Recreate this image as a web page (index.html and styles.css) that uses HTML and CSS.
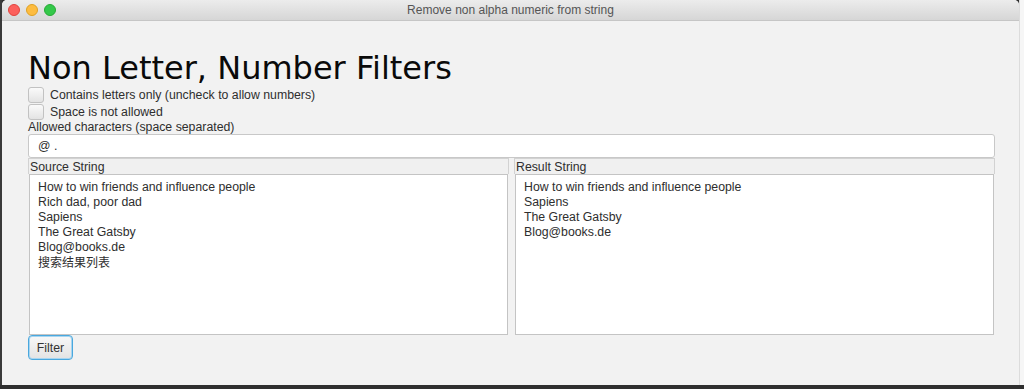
FILE: index.html
```html
<!DOCTYPE html>
<html>
<head>
<meta charset="utf-8">
<link rel="stylesheet" href="styles.css">
</head>
<body>
<div class="screen">
  <div class="row">
    <div class="edge-left"></div>
    <div class="window">
      <div class="titlebar">
        <div class="lights">
          <span class="light red"></span>
          <span class="light yellow"></span>
          <span class="light green"></span>
        </div>
        <div class="title">Remove non alpha numeric from string</div>
        <div></div>
      </div>
      <div class="content">
        <h1 class="heading">Non Letter, Number Filters</h1>
        <div class="check"><span class="box"></span><span>Contains letters only (uncheck to allow numbers)</span></div>
        <div class="check"><span class="box"></span><span>Space is not allowed</span></div>
        <div class="field-label">Allowed characters (space separated)</div>
        <div class="textfield">@ .</div>
        <div class="panels">
          <div class="panel">
            <div class="panel-head">Source String</div>
            <div class="textarea">
              <div>How to win friends and influence people</div>
              <div>Rich dad, poor dad</div>
              <div>Sapiens</div>
              <div>The Great Gatsby</div>
              <div>Blog@books.de</div>
              <div class="cjk">搜索结果列表</div>
            </div>
          </div>
          <div class="panel">
            <div class="panel-head">Result String</div>
            <div class="textarea">
              <div>How to win friends and influence people</div>
              <div>Sapiens</div>
              <div>The Great Gatsby</div>
              <div>Blog@books.de</div>
            </div>
          </div>
        </div>
        <div class="actions"><button class="btn">Filter</button></div>
      </div>
    </div>
    <div class="edge-right"></div>
  </div>
  <div class="bottom"></div>
</div>
</body>
</html>
```
FILE: styles.css
```css
html, body {
  margin: 0;
  padding: 0;
  background: #2e2e2e;
}
.screen {
  width: 1024px;
  height: 389px;
  display: flex;
  flex-direction: column;
  overflow: hidden;
  font-family: "Liberation Sans", Arial, "Noto Sans CJK SC", sans-serif;
  font-size: 12.3px;
  color: #2e2e2e;
}
.row {
  display: flex;
  height: 385px;
}
.edge-left {
  width: 2px;
  background: #3a3a3a;
}
.edge-right {
  width: 4px;
  background: #f6f6f6;
  border-left: 1px solid #dcdcdc;
}
.bottom {
  flex: 1;
  background: #2f2f2f;
}
.window {
  width: 1017px;
  background: #f2f2f2;
  border-radius: 5px 5px 0 0;
  display: flex;
  flex-direction: column;
  overflow: hidden;
}
.titlebar {
  height: 20px;
  border-bottom: 1px solid #c6c6c6;
  background: linear-gradient(#ececec, #d6d6d6);
  display: grid;
  grid-template-columns: 1fr auto 1fr;
  align-items: center;
}
.lights {
  display: flex;
  gap: 6px;
  padding-left: 6px;
}
.light {
  width: 12px;
  height: 12px;
  border-radius: 50%;
  box-sizing: border-box;
}
.red { background: #fc605c; border: 1px solid #e0443e; }
.yellow { background: #fdbc40; border: 1px solid #dea123; }
.green { background: #34c84a; border: 1px solid #27aa35; }
.title {
  font-size: 12px;
  color: #555;
}
.content {
  padding: 29px 24px 0 26px;
  display: flex;
  flex-direction: column;
}
.heading {
  margin: 0;
  font-family: "DejaVu Sans", sans-serif;
  font-weight: normal;
  font-size: 32px;
  line-height: 36px;
  color: #0a0a0a;
}
.check {
  height: 17px;
  display: flex;
  align-items: center;
  gap: 6px;
}
.box {
  width: 16px;
  height: 16px;
  box-sizing: border-box;
  border: 1px solid #c2c2c2;
  border-radius: 3px;
  background: linear-gradient(#fafafa, #e3e3e3);
}
.field-label {
  height: 14px;
  line-height: 14px;
}
.textfield {
  height: 24px;
  box-sizing: border-box;
  border: 1px solid #c8c8c8;
  border-radius: 3px;
  background: #fff;
  padding-left: 9px;
  line-height: 22px;
}
.panels {
  display: grid;
  grid-template-columns: 1fr 1fr;
  gap: 5px;
}
.panel {
  display: flex;
  flex-direction: column;
}
.panel-head {
  height: 16px;
  box-sizing: border-box;
  border: 1px solid #d2d2d2;
  border-bottom: none;
  background: #f0f0f0;
  padding-left: 1px;
  line-height: 16px;
}
.textarea {
  height: 161px;
  box-sizing: border-box;
  margin: 0 1px;
  border: 1px solid #c4c4c4;
  background: #fff;
  padding: 5px 0 0 8px;
  line-height: 15px;
}
.cjk {
  font-family: "Noto Sans CJK SC", sans-serif;
  font-size: 12px;
  line-height: 14px;
}
.actions {
  display: flex;
}
.btn {
  width: 45px;
  height: 25px;
  box-sizing: border-box;
  border: 1px solid #4aa8de;
  box-shadow: inset 0 0 0 1px #a8d5f0;
  border-radius: 4px;
  background: linear-gradient(#f8f8f8, #e3e3e3);
  font-family: "Liberation Sans", Arial, sans-serif;
  font-size: 12.3px;
  color: #333;
  padding: 0;
}
```
